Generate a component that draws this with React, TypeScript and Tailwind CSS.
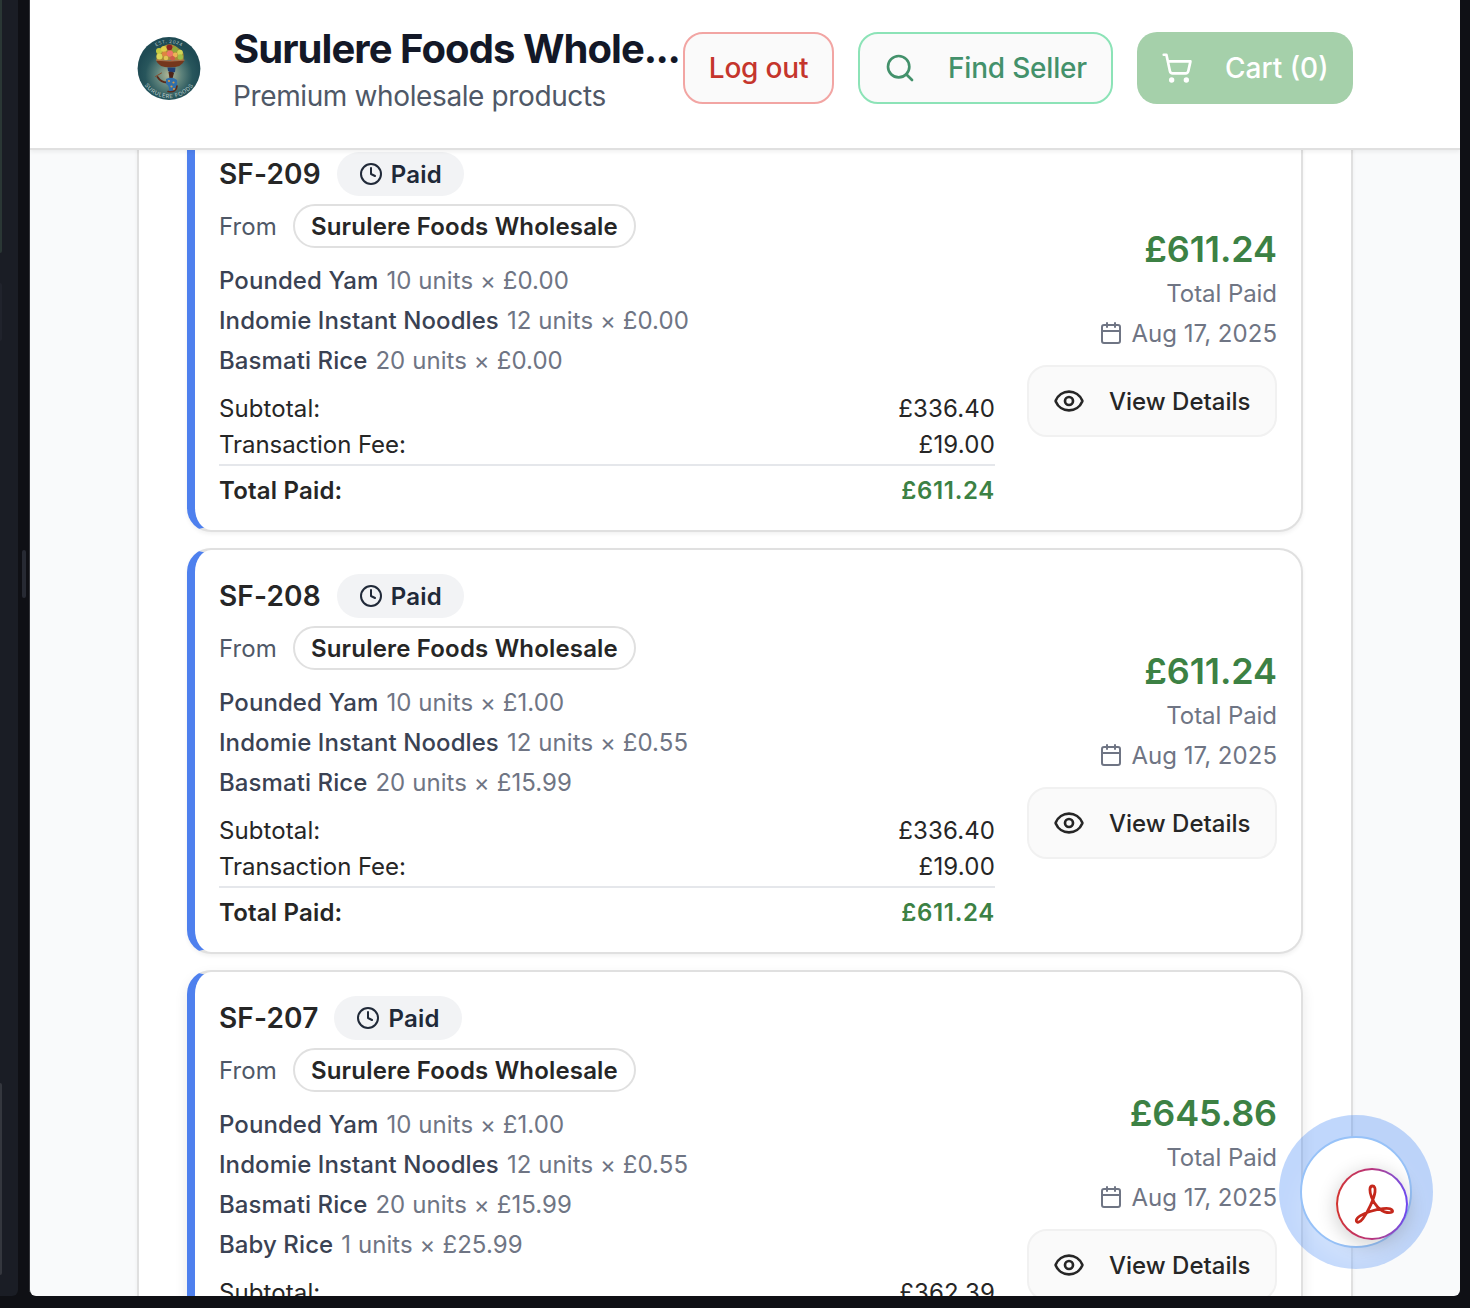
import type { ReactNode } from "react";
import { Calendar, Clock, Eye, Search, ShoppingCart } from "lucide-react";

type Item = { name: string; detail: string };
type Order = {
  id: string;
  items: Item[];
  subtotal: string;
  total: string;
  raised?: boolean;
};

const orders: Order[] = [
  {
    id: "SF-209",
    items: [
      { name: "Pounded Yam", detail: "10 units × £0.00" },
      { name: "Indomie Instant Noodles", detail: "12 units × £0.00" },
      { name: "Basmati Rice", detail: "20 units × £0.00" },
    ],
    subtotal: "£336.40",
    total: "£611.24",
  },
  {
    id: "SF-208",
    items: [
      { name: "Pounded Yam", detail: "10 units × £1.00" },
      { name: "Indomie Instant Noodles", detail: "12 units × £0.55" },
      { name: "Basmati Rice", detail: "20 units × £15.99" },
    ],
    subtotal: "£336.40",
    total: "£611.24",
  },
  {
    id: "SF-207",
    items: [
      { name: "Pounded Yam", detail: "10 units × £1.00" },
      { name: "Indomie Instant Noodles", detail: "12 units × £0.55" },
      { name: "Basmati Rice", detail: "20 units × £15.99" },
      { name: "Baby Rice", detail: "1 units × £25.99" },
    ],
    subtotal: "£362.39",
    total: "£645.86",
    raised: true,
  },
];

/** One 32px text line, with the baseline lowered by a pixel. */
function Line({ className = "", children }: { className?: string; children: ReactNode }) {
  return <span className={`block h-8 pt-px leading-8 ${className}`}>{children}</span>;
}

function BrandLogo() {
  return (
    <svg viewBox="0 0 64 64" className="size-16 shrink-0">
      <defs>
        <radialGradient id="disc" cx="50%" cy="60%" r="50%">
          <stop offset="0" stopColor="#b3b795" />
          <stop offset="0.4" stopColor="#5d827b" />
          <stop offset="0.75" stopColor="#28565c" />
          <stop offset="1" stopColor="#1f4b54" />
        </radialGradient>
        <path id="arcTop" d="M8 23 A 26 26 0 0 1 56 23" />
        <path id="arcBottom" d="M3.5 41 A 29.8 29.8 0 0 0 60.5 41" />
      </defs>
      <circle cx="32" cy="32.5" r="31.4" fill="url(#disc)" />
      <text fontFamily="Inter, sans-serif" fontSize="4.6" fill="#b9cac9" letterSpacing="0.5">
        <textPath href="#arcTop" startOffset="50%" textAnchor="middle">EST. 2024</textPath>
      </text>
      <text fontFamily="Inter, sans-serif" fontSize="5.6" fill="#b9cac9" letterSpacing="0.5">
        <textPath href="#arcBottom" startOffset="50%" textAnchor="middle">SURULERE FOODS</textPath>
      </text>
      <path d="M19.5 24 Q18.5 13 25 11 Q33 5 41 12 Q48 15 46.5 24Z" fill="#a98a38" />
      <circle cx="22" cy="15" r="3" fill="#c3cb40" />
      <circle cx="27" cy="13" r="3" fill="#e0cf4a" />
      <circle cx="32.5" cy="11.3" r="2.9" fill="#8c2422" />
      <circle cx="38" cy="13.6" r="2.8" fill="#8fa83a" />
      <circle cx="43" cy="16.5" r="2.8" fill="#d0d455" />
      <circle cx="22.5" cy="20.5" r="3" fill="#dbd75a" />
      <circle cx="27.6" cy="18" r="2.6" fill="#df8540" />
      <circle cx="33" cy="17.7" r="3.1" fill="#ee7468" />
      <circle cx="38.2" cy="19" r="2.4" fill="#edb256" />
      <circle cx="43.3" cy="21" r="2.7" fill="#a0be48" />
      <circle cx="29" cy="22" r="2.3" fill="#e2c554" />
      <circle cx="35.5" cy="22.3" r="2.4" fill="#d05a4a" />
      <path d="M19 24.2 Q33 26 47.5 24.2 Q45 31.5 33 31.5 Q21.5 31.5 19 24.2Z" fill="#74371d" />
      <path d="M19 24.2 Q33 26 47.5 24.2" fill="none" stroke="#b9754a" strokeWidth="0.9" />
      <path d="M30.5 31.5 H38.5 L38 36 Q34 37.5 31 35Z" fill="#1f3f74" />
      <path d="M31.5 36 Q35 35 37 37 L35.5 42.5 H32.5Z" fill="#4d2418" />
      <path d="M20.5 41 Q24 46.5 30 46.5" fill="none" stroke="#5a2b1c" strokeWidth="1.9" strokeLinecap="round" />
      <path d="M18.5 40.5 L24.5 37" stroke="#8a4a28" strokeWidth="1" strokeLinecap="round" />
      <path d="M29 43 Q35 40 40 44 Q41 51 37.5 56 H32 Q33 50 29 48Z" fill="#2f6fab" />
      <circle cx="32" cy="45" r="1.1" fill="#d79a45" />
      <circle cx="36.5" cy="46.5" r="1.1" fill="#d79a45" />
      <circle cx="34.5" cy="50.5" r="1.1" fill="#d79a45" />
      <circle cx="37" cy="53" r="1.1" fill="#d79a45" />
      <path d="M40 50 Q39.5 57 31 55.5" fill="none" stroke="#5a2b1c" strokeWidth="1.7" strokeLinecap="round" />
    </svg>
  );
}

function AcrobatMark() {
  return (
    <svg viewBox="0 0 40 40" className="size-10" fill="none" stroke="#c5281c" strokeWidth="2.8" strokeLinejoin="round">
      <path d="M18.5 2 C15 2 15.5 8 17.5 13 C20 20 26 27.5 33 28.5 C38 29.2 39.5 27.5 38 26 C35.5 23 24 25 16 27.5 C9 29.5 2.3 33.5 2.3 36.5 C2.3 39.3 6 38.8 9 34.5 C14 28 20 15 21 8 C21.5 4 20.5 2 18.5 2Z" />
    </svg>
  );
}

function Header() {
  return (
    <header className="relative z-10 h-[150px] border-b-2 border-[#e0e0e0] bg-white px-[107px] pt-5 shadow-[0_2px_4px_rgba(0,0,0,0.06)]">
      <div className="flex h-24 items-center">
        <BrandLogo />
        <div className="ml-8 h-24 w-[450px] shrink-0 whitespace-nowrap">
          <h1 className="h-14 pt-px text-[40px] leading-[56px] font-bold tracking-[-0.94px] text-[#131827]">
            Surulere Foods Whole<span className="tracking-[-1.6px]">...</span>
          </h1>
          <p className="text-[28px] leading-10 tracking-[-0.38px] text-[#4f5867]">Premium wholesale products</p>
        </div>
        <div className="flex flex-1 gap-6 text-[28px] leading-8 font-medium whitespace-nowrap">
          <button className="flex h-[72px] w-[151px] items-center justify-center rounded-[20px] border-2 border-[#f2a5a3] bg-[#fafafa] tracking-[-0.2px] text-[#c5352c]">
            Log out
          </button>
          <button className="flex h-[72px] w-[255px] items-center gap-8 rounded-[20px] border-2 border-[#8ce3b7] bg-[#fafafa] pl-6 tracking-[-0.2px] text-[#43916b]">
            <Search size={32} />
            Find Seller
          </button>
          <button className="flex h-[72px] w-[216px] items-center gap-8 rounded-[20px] bg-[#a5d0aa] pl-6 text-white">
            <ShoppingCart size={32} />
            Cart (0)
          </button>
        </div>
      </div>
    </header>
  );
}

function OrderCard({ order }: { order: Order }) {
  return (
    <article
      className={`flex shrink-0 items-center gap-8 rounded-3xl border-2 border-l-8 border-[#e0e0e0] border-l-[#4e80ee] bg-white p-6 text-2xl leading-8 text-[#262626] ${
        order.raised
          ? "shadow-[0_6px_14px_rgba(0,0,0,0.09)]"
          : "shadow-[0_2px_4px_rgba(0,0,0,0.06)]"
      }`}
    >
      <div className="flex-1">
        <div className="flex items-center gap-4">
          <h2 className="text-[28px] leading-8 font-semibold tracking-[0.16px]">{order.id}</h2>
          <span className="flex h-11 items-center gap-2 rounded-full bg-[#f2f3f5] px-[22px] font-semibold tracking-[0.2px] text-[#202938]">
            <Clock size={24} />
            <Line>Paid</Line>
          </span>
        </div>
        <div className="mt-2 flex items-center gap-4">
          <Line className="tracking-[0.1px] text-[#4f5867]">From</Line>
          <span className="flex h-11 items-center rounded-full border-2 border-[#e0e0e0] px-4 font-semibold tracking-[0.18px]">
            <Line>Surulere Foods Wholesale</Line>
          </span>
        </div>
        <ul className="mt-4 flex flex-col gap-2">
          {order.items.map((item) => (
            <li key={item.name} className="flex gap-2 tracking-[0.08px]">
              <Line className="font-medium text-[#3a4253]">{item.name}</Line>
              <Line className="text-[#6f7584]">{item.detail}</Line>
            </li>
          ))}
        </ul>
        <dl className="mt-4 flex flex-col gap-1">
          <div className="flex justify-between">
            <dt>
              <Line className="tracking-[0.1px]">Subtotal:</Line>
            </dt>
            <dd>
              <Line className="tracking-[0.1px]">{order.subtotal}</Line>
            </dd>
          </div>
          <div className="flex justify-between">
            <dt>
              <Line className="tracking-[-0.06px]">Transaction Fee:</Line>
            </dt>
            <dd>
              <Line className="tracking-[0.2px]">£19.00</Line>
            </dd>
          </div>
          <div className="flex justify-between border-t-2 border-[#e5e7eb] pt-2 font-semibold">
            <dt>
              <Line className="tracking-[0.2px]">Total Paid:</Line>
            </dt>
            <dd>
              <Line className="tracking-[0.7px] text-[#3c8144]">{order.total}</Line>
            </dd>
          </div>
        </dl>
      </div>
      <div className="flex w-[250px] flex-col items-end text-[#6f7584]">
        <p className="text-4xl leading-[56px] font-semibold tracking-[-0.1px] text-[#3c8144]">{order.total}</p>
        <Line className="tracking-[-0.06px]">Total Paid</Line>
        <div className="mt-2 flex items-center gap-2">
          <Calendar size={24} />
          <Line className="tracking-[0.03px]">Aug 17, 2025</Line>
        </div>
        <button className="mt-4 flex h-[72px] w-full items-center gap-6 rounded-[20px] border-2 border-[#f1f1f1] bg-[#fafafa] pl-6 font-medium text-[#262626]">
          <Eye size={32} />
          <Line>View Details</Line>
        </button>
      </div>
    </article>
  );
}

function FloatingActions() {
  return (
    <div className="absolute top-[1115px] left-[1249px] z-20 flex size-[154px] items-center justify-center rounded-full bg-[#3b82f6]/32">
      <div className="relative size-28 rounded-full border-2 border-[#97c2f8] bg-white shadow-[0_20px_30px_-4px_rgba(255,255,255,0.3)]">
        <div className="absolute top-[30px] left-[34px] size-[72px] rounded-full bg-linear-to-r from-[#d2332c] via-[#b8327c] to-[#6b48f2] p-0.5 shadow-[0_4px_20px_rgba(0,0,0,0.2)]">
          <div className="flex size-full items-center justify-center rounded-full bg-white pl-1">
            <AcrobatMark />
          </div>
        </div>
      </div>
    </div>
  );
}

export default function App() {
  return (
    <div className="flex h-[1308px] w-[1470px] overflow-hidden bg-[#0f1015] font-[Inter,sans-serif]">
      <aside className="h-[1296px] w-[18px] shrink-0 overflow-hidden rounded-br-md bg-[#1a1d25]">
        <div className="-mt-3 h-[265px] w-0.5 rounded-r-sm bg-[#2a3735]" />
        <div className="mt-[30px] h-[58px] w-0.5 rounded-r-sm bg-[#20232c]" />
        <div className="mt-[742px] h-[192px] w-0.5 rounded-r-sm bg-[#34373e]" />
      </aside>
      <div className="flex h-[1292px] w-3 shrink-0 justify-end border-r border-[#35363b] pt-[550px] pr-[3px]">
        <div className="h-12 w-1 rounded-full bg-[#272a33]" />
      </div>
      <div className="relative h-[1296px] w-[1430px] shrink-0 overflow-hidden rounded-b-md bg-[#f9fafb]">
        <Header />
        <main className="mx-[107px] -mt-6 flex h-[1300px] flex-col gap-4 border-x-2 border-[#e0e0e0] bg-white px-12 shadow-[0_0_4px_rgba(0,0,0,0.05)]">
          {orders.map((order) => (
            <OrderCard key={order.id} order={order} />
          ))}
        </main>
        <FloatingActions />
      </div>
    </div>
  );
}
